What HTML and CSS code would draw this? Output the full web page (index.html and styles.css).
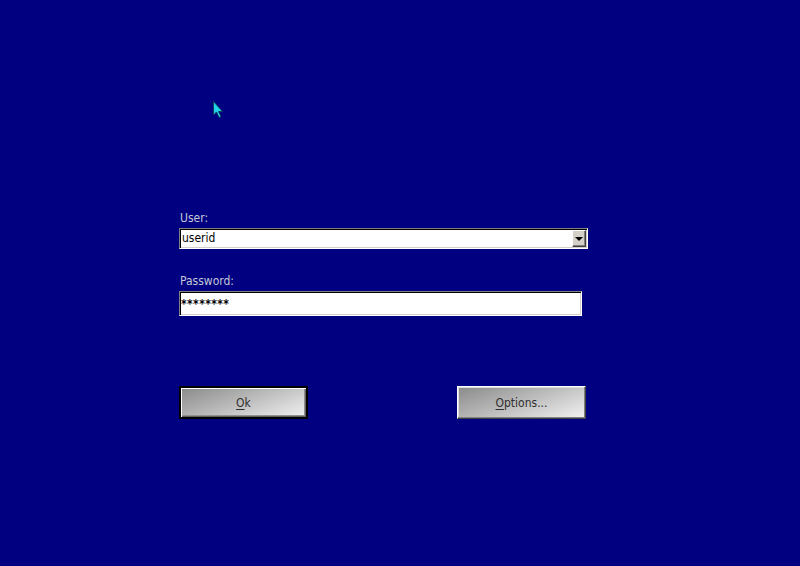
FILE: index.html
```html
<!DOCTYPE html>
<html>
<head>
<meta charset="utf-8">
<link rel="stylesheet" href="styles.css">
</head>
<body>
<div class="screen">
  <svg class="cursor" width="12" height="18" viewBox="0 0 12 18">
    <path d="M0.5 0.5 L0.5 14 L3.5 11 L6 16.5 L8 15.5 L5.5 10.5 L9.5 10.5 Z" fill="#22d0e8" stroke="#0a4060" stroke-width="1"/>
  </svg>
  <form class="login">
    <div class="field user-field">
      <label class="label">User:</label>
      <div class="combo">
        <span class="combo-text">userid</span>
        <span class="combo-btn"><span class="arrow"></span></span>
      </div>
    </div>
    <div class="field pass-field">
      <label class="label">Password:</label>
      <div class="entry"><span class="entry-text">********</span></div>
    </div>
    <div class="buttons">
      <div class="btn btn-default"><span class="btn-face"><u>O</u>k</span></div>
      <div class="btn"><span class="btn-face"><u>O</u>ptions...</span></div>
    </div>
  </form>
</div>
</body>
</html>
```
FILE: styles.css
```css
html, body {
  margin: 0;
  padding: 0;
  background: #000080;
}
.screen {
  width: 800px;
  height: 566px;
  position: relative;
  overflow: hidden;
  background: #000080;
  font-family: "DejaVu Sans Condensed", "DejaVu Sans", sans-serif;
  font-size: 12px;
}
.cursor {
  position: absolute;
  left: 213px;
  top: 101px;
}
.login {
  margin: 0;
  padding: 211px 0 0 179px;
  display: flex;
  flex-direction: column;
}
.field {
  display: flex;
  flex-direction: column;
}
.label {
  color: #c4c8d8;
  height: 17px;
  line-height: 14px;
  padding-left: 1px;
}
.combo {
  width: 405px;
  height: 17px;
  display: flex;
  align-items: stretch;
  background: #fff;
  border: 1px solid;
  border-color: #808080 #ffffff #ffffff #808080;
  box-shadow: inset 1px 1px 0 #000, inset -1px -1px 0 #d4d0c8;
  padding: 1px;
}
.combo-text {
  flex: 1;
  line-height: 17px;
  color: #000;
  padding-left: 1px;
}
.combo-btn {
  width: 14px;
  background: #d4d0c8;
  border: 1px solid;
  border-color: #ffffff #404040 #404040 #ffffff;
  box-shadow: inset -1px -1px 0 #808080;
  display: flex;
  align-items: center;
  justify-content: center;
  box-sizing: border-box;
}
.arrow {
  width: 0;
  height: 0;
  border-left: 4px solid transparent;
  border-right: 4px solid transparent;
  border-top: 4px solid #000;
  margin-top: 1px;
}
.pass-field {
  margin-top: 25px;
}
.entry {
  width: 399px;
  height: 21px;
  background: #fff;
  border: 1px solid;
  border-color: #808080 #ffffff #ffffff #808080;
  box-shadow: inset 1px 1px 0 #000, inset -1px -1px 0 #d4d0c8;
  padding: 1px;
  display: flex;
  align-items: center;
}
.entry-text {
  color: #000;
  font-size: 12px;
  font-weight: bold;
  padding-left: 0px;
  letter-spacing: 0.4px;
}
.buttons {
  margin-top: 70px;
  width: 407px;
  display: flex;
  justify-content: space-between;
}
.btn {
  width: 129px;
  height: 33px;
  box-sizing: border-box;
  border: 1px solid;
  border-color: #ffffff #404040 #404040 #ffffff;
  background: linear-gradient(160deg, #8a8a8a 0%, #b8b8b8 45%, #f2f2f2 100%);
  box-shadow: inset -1px -1px 0 #808080, inset 1px 1px 0 #dcdcdc;
  display: flex;
  align-items: center;
  justify-content: center;
}
.btn-default {
  width: 129px;
  border: 2px solid #000;
  box-shadow: inset 1px 1px 0 #ffffff, inset -1px -1px 0 #606060, inset -2px -2px 0 #909090;
}
.btn-face {
  color: #303030;
  font-size: 12px;
}
.btn-face u {
  text-decoration: underline;
  text-underline-offset: 2px;
}
```
